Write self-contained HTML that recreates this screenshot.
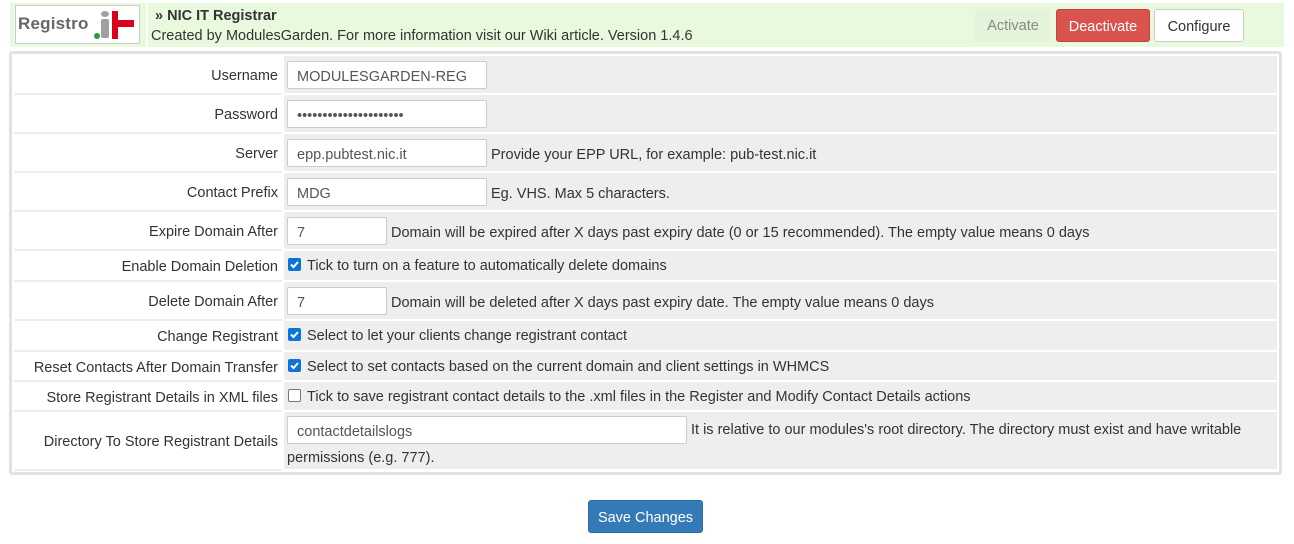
<!DOCTYPE html>
<html><head><meta charset="utf-8"><style>
*{box-sizing:border-box;margin:0;padding:0}
body{width:1294px;height:544px;background:#fff;font-family:"Liberation Sans",sans-serif;font-size:14.5px;color:#333;position:relative;overflow:hidden}
.a{position:absolute}
.hdr{left:10px;top:3px;width:1274px;height:44px;background:#e8f9de}
.logo{left:15px;top:5px;width:125px;height:39px;background:#fff;border:1px solid #ccc}
.sep{left:146px;top:3px;width:2px;height:44px;background:#fff}
.btn{position:absolute;height:33px;line-height:34px;text-align:center;border-radius:3px;font-size:14.5px}
.box{left:9px;top:51px;width:1273px;height:424px;border:3px solid #dfe3e6;border-radius:3px;background:#fff}
.lab{position:absolute;left:14px;width:268px;text-align:right;padding-right:4px;padding-top:2px;background:#fff;border-bottom:2px solid #eee}
.fld{position:absolute;left:284px;width:993px;background:#eee;padding-left:3px;padding-top:2px}
.inp{display:inline-block;height:28px;border:1px solid #ccc;background:#fff;border-radius:2px;padding-left:9px;padding-top:2px;line-height:26px;vertical-align:middle;color:#555}
.cb{display:inline-block;width:13px;height:13px;background:#0a74d9;border-radius:2px;vertical-align:middle;margin:0 6px 0 1px;position:relative;top:-2px}
.cb svg{display:block}
.cbo{background:#fff;border:1px solid #777}
.t{vertical-align:middle;margin-left:4px;position:relative;top:2px}
</style></head><body>
<div class="a hdr"></div>
<div class="a sep"></div>
<div class="a logo">
 <span class="a" style="left:2px;top:8px;font-weight:bold;font-size:17px;color:#666;letter-spacing:0.2px">Registro</span>
 <span class="a" style="left:78px;top:27px;width:6px;height:6px;border-radius:50%;background:#2a9a3a"></span>
 <span class="a" style="left:85px;top:13px;width:8px;height:19px;background:#a0a0a0;border-radius:2px"></span>
 <span class="a" style="left:85px;top:5px;width:8px;height:6px;background:#a0a0a0;border-radius:50%"></span>
 <span class="a" style="left:96px;top:5px;width:6px;height:28px;background:#d9001b"></span>
 <span class="a" style="left:96px;top:14px;width:22px;height:7px;background:#d9001b"></span>
</div>
<div class="a" style="left:155px;top:8px;font-weight:bold">» NIC IT Registrar</div>
<div class="a" style="left:151px;top:28px">Created by ModulesGarden. For more information visit our Wiki article. Version 1.4.6</div>
<div class="btn" style="left:975px;top:9px;width:76px;background:#e3f4da;color:#888">Activate</div>
<div class="btn" style="left:1056px;top:9px;width:94px;background:#d9534f;color:#fff;border:1px solid #c9403c">Deactivate</div>
<div class="btn" style="left:1154px;top:9px;width:90px;background:#fff;border:1px solid #ccc;color:#333">Configure</div>
<div class="a box"></div>

<div class="lab" style="top:56px;height:39px;line-height:37px">Username</div>
<div class="fld" style="top:56px;height:37px;padding-top:5px"><span class="inp" style="width:200px">MODULESGARDEN-REG</span></div>
<div class="lab" style="top:95px;height:39px;line-height:37px">Password</div>
<div class="fld" style="top:95px;height:37px;padding-top:5px"><span class="inp" style="width:200px">•••••••••••••••••••••</span></div>
<div class="lab" style="top:134px;height:39px;line-height:37px">Server</div>
<div class="fld" style="top:134px;height:37px;padding-top:5px"><span class="inp" style="width:200px">epp.pubtest.nic.it</span><span class="t">Provide your EPP URL, for example: pub-test.nic.it</span></div>
<div class="lab" style="top:173px;height:39px;line-height:37px">Contact Prefix</div>
<div class="fld" style="top:173px;height:37px;padding-top:5px"><span class="inp" style="width:200px">MDG</span><span class="t">Eg. VHS. Max 5 characters.</span></div>
<div class="lab" style="top:212px;height:39px;line-height:37px">Expire Domain After</div>
<div class="fld" style="top:212px;height:37px;padding-top:5px"><span class="inp" style="width:100px">7</span><span class="t">Domain will be expired after X days past expiry date (0 or 15 recommended). The empty value means 0 days</span></div>
<div class="lab" style="top:251px;height:31px;line-height:29px">Enable Domain Deletion</div>
<div class="fld" style="top:251px;height:29px;line-height:27px"><span class="cb"><svg width="13" height="13"><path d="M3 6.5l2.5 2.5 4.5-5" stroke="#fff" stroke-width="2" fill="none"/></svg></span>Tick to turn on a feature to automatically delete domains</div>
<div class="lab" style="top:282px;height:39px;line-height:37px">Delete Domain After</div>
<div class="fld" style="top:282px;height:37px;padding-top:5px"><span class="inp" style="width:100px">7</span><span class="t">Domain will be deleted after X days past expiry date. The empty value means 0 days</span></div>
<div class="lab" style="top:321px;height:31px;line-height:29px">Change Registrant</div>
<div class="fld" style="top:321px;height:29px;line-height:27px"><span class="cb"><svg width="13" height="13"><path d="M3 6.5l2.5 2.5 4.5-5" stroke="#fff" stroke-width="2" fill="none"/></svg></span>Select to let your clients change registrant contact</div>
<div class="lab" style="top:352px;height:30px;line-height:28px">Reset Contacts After Domain Transfer</div>
<div class="fld" style="top:352px;height:28px;line-height:26px"><span class="cb"><svg width="13" height="13"><path d="M3 6.5l2.5 2.5 4.5-5" stroke="#fff" stroke-width="2" fill="none"/></svg></span>Select to set contacts based on the current domain and client settings in WHMCS</div>
<div class="lab" style="top:382px;height:30px;line-height:28px">Store Registrant Details in XML files</div>
<div class="fld" style="top:382px;height:28px;line-height:26px"><span class="cb cbo"></span>Tick to save registrant contact details to the .xml files in the Register and Modify Contact Details actions</div>
<div class="lab" style="top:412px;height:59px;line-height:57px">Directory To Store Registrant Details</div>
<div class="fld" style="top:412px;height:57px;padding-top:4px;line-height:24px"><span class="inp" style="width:400px;vertical-align:top">contactdetailslogs</span><span style="margin-left:4px;position:relative;top:2px">It is relative to our modules's root directory. The directory must exist and have writable </span><span style="position:relative;top:2px">permissions (e.g. 777).</span></div>

<div class="btn" style="left:588px;top:500px;width:115px;background:#337ab7;color:#fff;border:1px solid #2e6da4">Save Changes</div>
</body></html>
